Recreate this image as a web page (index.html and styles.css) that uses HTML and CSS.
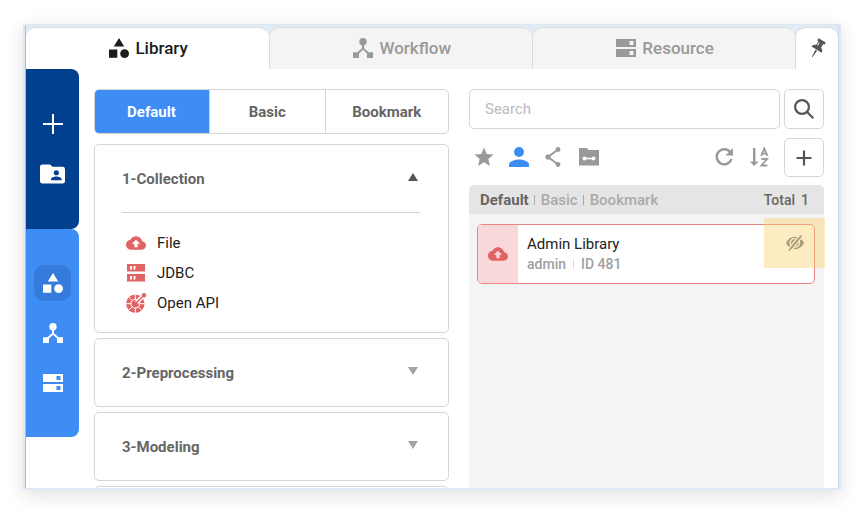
FILE: index.html
```html
<!DOCTYPE html>
<html lang="en">
<head>
<meta charset="utf-8">
<meta name="viewport" content="width=device-width, initial-scale=1">
<title>Library</title>
<link rel="stylesheet" href="styles.css">
</head>
<body>
<svg class="sprite" aria-hidden="true">
  <symbol id="shapes" viewBox="0 0 20 20"><path d="M10 0l5.200 8.600H4.800zM0 11.500h8.300v8.300H0z"/><circle cx="15.600" cy="15.600" r="4.400"/></symbol>
  <symbol id="flow" viewBox="0 0 20 20"><circle cx="10" cy="3.800" r="3.700"/><path d="M9 7h2v3.200l4.600 4H20V20h-6v-4.600l-4-3.600-4 3.600V20H0v-5.800h4.400l4.600-4z"/></symbol>
  <symbol id="server" viewBox="0 0 20 20"><path fill-rule="evenodd" d="M0 1h20v8H0zM13.500 3v4h4V3zM0 11h20v8H0zM13.500 13v4h4v-4z"/></symbol>
  <symbol id="cloud" viewBox="0 0 24 24"><path d="M19.350 10.040C18.670 6.590 15.640 4 12 4 9.110 4 6.600 5.640 5.350 8.040 2.340 8.360 0 10.910 0 14c0 3.310 2.690 6 6 6h13c2.760 0 5-2.240 5-5 0-2.640-2.050-4.780-4.650-4.960zM14 13v4h-4v-4H7l5-5 5 5h-3z"/></symbol>
</svg>
<div class="window">
  <nav class="tabs" aria-label="Sections">
    <button class="tab tab-active"><svg class="icon"><use href="#shapes"/></svg>Library</button>
    <button class="tab"><svg class="icon"><use href="#flow"/></svg>Workflow</button>
    <button class="tab"><svg class="icon"><use href="#server"/></svg>Resource</button>
    <button class="pin" aria-label="Pin panel"><svg class="icon" viewBox="0 0 20 20"><g transform="rotate(31 10 10)"><path d="M5.800 0h8.400v2.600h-1.400v4.200c1.900.6 3 1.800 3.200 4H4c.2-2.200 1.300-3.400 3.200-4V2.600H5.800zM9 11.500h2L10.300 19.500h-.6z"/><path class="shine" d="M8 3.200h1.200v3.600H8z"/></g></svg></button>
  </nav>
  <div class="body">
    <aside class="sidebar">
      <div class="rail rail-dark">
        <button class="rail-button" aria-label="Add"><svg class="icon" viewBox="0 0 20 20"><path d="M9 0h2v9h9v2h-9v9H9v-9H0V9h9z"/></svg></button>
        <button class="rail-button" aria-label="Shared folder"><svg class="icon-wide" viewBox="0 0 26 20"><path fill-rule="evenodd" d="M2.500 0h8l2.500 2.500h10.500A2.500 2.500 0 0 1 26 5v12.500a2.500 2.500 0 0 1-2.500 2.500h-21A2.500 2.500 0 0 1 0 17.500v-15A2.500 2.500 0 0 1 2.500 0zM17 6a2.700 2.700 0 1 0 0 5.400A2.700 2.700 0 0 0 17 6zM11.500 16.500h11v-1c0-1.800-3.600-2.800-5.500-2.800s-5.500 1-5.500 2.800z"/></svg></button>
      </div>
      <div class="rail rail-light">
        <button class="rail-button rail-current" aria-label="Library"><svg class="icon"><use href="#shapes"/></svg></button>
        <button class="rail-button" aria-label="Workflow"><svg class="icon"><use href="#flow"/></svg></button>
        <button class="rail-button" aria-label="Resource"><svg class="icon"><use href="#server"/></svg></button>
      </div>
    </aside>
    <main class="main">
      <section class="column">
        <div class="segments">
          <button class="segment segment-active">Default</button>
          <button class="segment">Basic</button>
          <button class="segment segment-last">Bookmark</button>
        </div>
        <div class="groups">
          <section class="group">
            <button class="group-head">1-Collection<svg class="caret caret-open" viewBox="0 0 10 8"><path d="M5 0l5 8H0z"/></svg></button>
            <ul class="items">
              <li><svg class="icon"><use href="#cloud"/></svg>File</li>
              <li><svg class="icon" viewBox="0 0 20 20"><path fill-rule="evenodd" d="M1 1h18v7.500H1zM4 3v3.500h2V3zM7.500 3v3.500h2V3zM1 11h18v7.500H1zM4 13v3.500h2V13zM7.500 13v3.500h2V13z"/></svg>JDBC</li>
              <li><svg class="icon" viewBox="0 0 20 20"><circle cx="9.300" cy="10.700" r="9.200"/><g class="spokes"><path d="M9.300 1.500v5M0 10.700h5M9.300 20v-5M2.800 4.200l3.500 3.500M2.800 17.200l3.500-3.500M15.800 17.200l-3.500-3.500M18.500 10.700h-5"/><circle cx="9.300" cy="10.700" r="4.400"/><path class="gap-line" d="M10 10l8-8"/></g><circle cx="9.300" cy="10.700" r="2.300"/><path class="needle" d="M9.300 10.700L18 2.200"/><circle cx="18" cy="2.200" r="2.200"/></svg>Open API</li>
            </ul>
          </section>
          <section class="group"><button class="group-head">2-Preprocessing<svg class="caret" viewBox="0 0 10 8"><path d="M0 0h10L5 8z"/></svg></button></section>
          <section class="group"><button class="group-head">3-Modeling<svg class="caret" viewBox="0 0 10 8"><path d="M0 0h10L5 8z"/></svg></button></section>
          <section class="group"><button class="group-head" aria-label="Next group"></button></section>
        </div>
      </section>
      <section class="column">
        <form class="search">
          <input class="search-input" type="search" placeholder="Search" aria-label="Search">
          <button class="square" type="button" aria-label="Search"><svg class="icon" viewBox="0 0 20 20"><g class="stroke"><circle cx="8" cy="8" r="6.900"/><path d="M13 13l6.300 6.300"/></g></svg></button>
        </form>
        <div class="toolbar">
          <button class="tool" aria-label="Favorites"><svg class="icon" viewBox="0 0 20 20"><path d="M10 .5l2.700 6.600 6.800.5-5.200 4.500 1.600 6.900-5.900-3.700L4.100 19l1.600-6.900L.5 7.600l6.800-.5z"/></svg></button>
          <button class="tool tool-active" aria-label="Mine"><svg class="icon" viewBox="0 0 20 20"><circle cx="10" cy="5" r="5"/><path d="M0 20v-2.500c0-3.400 6.500-5 10-5s10 1.600 10 5V20z"/></svg></button>
          <button class="tool" aria-label="Shared"><svg class="icon" viewBox="0 0 20 20"><path class="share-line" d="M14 2.500L4 10l10 7.500"/><circle cx="14" cy="2.500" r="2.400"/><circle cx="4" cy="10" r="2.600"/><circle cx="14" cy="17.500" r="2.400"/></svg></button>
          <button class="tool" aria-label="Folders"><svg class="icon" viewBox="0 0 20 20"><path d="M0 1h7.500l2 2H20v15.500H0z"/><g class="link"><circle cx="5.500" cy="11.500" r="1.900"/><circle cx="14.500" cy="11.500" r="1.900"/><path d="M5 10.700h10v1.600H5z"/></g></svg></button>
          <span class="spacer"></span>
          <button class="tool" aria-label="Refresh"><svg class="icon" viewBox="0 0 20 20"><path class="refresh-arc" d="M16.300 5.400A7.500 7.500 0 1 0 17.400 12"/><path d="M19 1v7.500h-7.500z"/></svg></button>
          <button class="tool" aria-label="Sort A to Z"><svg class="icon" viewBox="0 0 20 20"><path d="M4 1h2.400v13.500h3.200L5.200 19 .8 14.500H4z"/><g class="letters"><path d="M12.200 8.800L15.300 1.500l3.100 7.300M13.300 6.700h4M12.400 12h5.700l-5.700 6.500h6"/></g></svg></button>
          <button class="square square-low" aria-label="Add"><svg class="icon" viewBox="0 0 20 20"><path d="M8.900 2.500h2.200v6.400h6.400v2.200h-6.400v6.400H8.900v-6.400H2.500V8.900h6.400z"/></svg></button>
        </div>
        <section class="list">
          <header class="list-head">
            <span class="crumb crumb-current">Default</span><span class="crumb">Basic</span><span class="crumb">Bookmark</span>
            <span class="total">Total<span>1</span></span>
          </header>
          <article class="entry">
            <div class="entry-icon"><svg class="icon"><use href="#cloud"/></svg></div>
            <div class="entry-text">
              <h2>Admin Library</h2>
              <p><span>admin</span><span class="entry-id">ID 481</span></p>
            </div>
            <button class="hide" aria-label="Hide"><svg class="eye" viewBox="0 0 20 16"><path d="M1 8c2-4 5.200-6.200 9-6.200S17 4 19 8c-2 4-5.200 6.200-9 6.200S3 12 1 8z"/><g class="cut"><path d="M6.200 10.500A4 4 0 0 1 10.500 4M9.500 12A4 4 0 0 0 13.800 5.800"/><path d="M2.600 15L14.600 0M5.800 16L17.800 1"/></g><path class="slash" d="M4 15.500L16.500.5"/></svg></button>
          </article>
        </section>
      </section>
    </main>
  </div>
</div>
</body>
</html>
```
FILE: styles.css
```css
* { box-sizing: border-box; }

body {
  margin: 0;
  padding: 26px 29px 36px 25px;
  font-family: Roboto, "Liberation Sans", sans-serif;
  font-size: 15px;
  line-height: 20px;
  color: #222;
  background: #fff;
}

button {
  margin: 0;
  padding: 0;
  border: 0;
  background: none;
  font: inherit;
  color: inherit;
}

svg { display: block; fill: currentColor; flex: none; overflow: visible; }
.sprite { position: absolute; width: 0; height: 0; }
.icon { width: 20px; height: 20px; }
.icon-wide { width: 25px; height: 20px; }

.window {
  display: flex;
  flex-direction: column;
  height: calc(100vh - 62px);
  border: solid #d3d9e0;
  border-width: 0 1px;
  border-left-color: #b3bac2;
  background: #fff;
  box-shadow: 0 0 0 2px #dfe9f5, 0 5px 18px 3px rgba(0, 0, 0, 0.11);
  overflow: hidden;
}

.tabs { display: flex; height: 43px; padding-top: 1px; background: #e3ebf5; }

.tab {
  display: flex;
  flex: 14 1 0;
  align-items: center;
  justify-content: center;
  gap: 6px;
  padding: 0 0 2px 2px;
  border: 1px solid #dcdcdc;
  border-width: 1px 0 0 1px;
  border-radius: 10px 10px 0 0;
  background: #f4f4f4;
  color: #999;
  font-size: 17px;
  font-weight: 500;
}

.tab-active { flex-grow: 13; border-left: 0; background: #fff; color: #1c1c1c; }

.pin {
  display: flex;
  flex: 0 0 43px;
  align-items: center;
  justify-content: center;
  border: 1px solid #dcdcdc;
  border-width: 1px 0 0 1px;
  border-radius: 10px 10px 0 0;
  background: #fff;
  color: #555;
}

.shine { fill: #ddd; }

.body { display: flex; flex: 1; min-height: 0; }
.sidebar { flex: 0 0 53px; }

.rail {
  display: flex;
  flex-direction: column;
  align-items: center;
  gap: 14px;
  padding: 36px 0;
  border-radius: 0 8px 8px 0;
  color: #fff;
}

.rail-dark { padding: 37px 0; background: #00408f; }
.rail-light { background: #3d8df5; }

.rail-button {
  display: flex;
  align-items: center;
  justify-content: center;
  width: 37px;
  height: 36px;
  border-radius: 10px;
}

.rail-current { background: #357bdc; }

.main { display: flex; flex: 1; gap: 20px; min-width: 0; padding: 20px 14px 0 15px; }
.column { display: flex; flex: 1 1 0; flex-direction: column; min-width: 0; }

.segments {
  display: flex;
  flex: none;
  height: 45px;
  border: 1px solid #d6d6d6;
  border-radius: 5px;
  overflow: hidden;
}

.segment { flex: 15 1 0; border-left: 1px solid #d6d6d6; color: #666; font-weight: 700; }
.segment-active { margin: -1px 0 -1px -1px; border: 0; background: #3d8df5; color: #fff; }
.segment-last { flex-grow: 16; }

.groups { display: flex; flex-direction: column; gap: 5px; padding-top: 10px; }
.group { border: 1px solid #d6d6d6; border-radius: 5px; padding: 0 28px 0 27px; }

.group-head {
  display: flex;
  align-items: center;
  justify-content: space-between;
  width: 100%;
  height: 67px;
  color: #666;
  font-weight: 700;
}

.caret { width: 10px; height: 8px; margin: 0 2px 4px 0; color: #a3a3a3; }
.caret-open { color: #555; }

.items {
  margin: 0;
  padding: 15px 4px 14px;
  border-top: 1px solid #d0d0d0;
  list-style: none;
}

.items li { display: flex; align-items: center; gap: 11px; height: 30px; }
.items .icon { color: #e06464; }
.spokes { fill: none; stroke: #fff; stroke-width: 1; }
.gap-line { stroke-width: 4; }
.needle { fill: none; stroke: #e06464; stroke-width: 1.500; }

.search { display: flex; flex: none; gap: 4px; margin: 0; }

.search-input {
  flex: 1;
  min-width: 0;
  height: 40px;
  padding: 0 15px;
  border: 1px solid #d6d6d6;
  border-radius: 5px;
  background: #fff;
  font: inherit;
}

.search-input::placeholder { color: #bbb; opacity: 1; }

.square {
  display: flex;
  flex: 0 0 40px;
  align-items: center;
  justify-content: center;
  height: 40px;
  border: 1px solid #d6d6d6;
  border-radius: 5px;
  color: #555;
}

.square-low { height: 39px; }
.stroke { fill: none; stroke: currentColor; stroke-width: 2.200; }

.toolbar { display: flex; flex: none; align-items: center; gap: 15px; padding: 9px 0 8px 5px; }
.tool { padding-bottom: 1px; color: #999; }
.tool-active { color: #3d8df5; }
.spacer { flex: 1; }
.share-line { fill: none; stroke: currentColor; stroke-width: 2; }
.link { fill: #fff; }
.refresh-arc { fill: none; stroke: currentColor; stroke-width: 2.400; }
.letters { fill: none; stroke: currentColor; stroke-width: 1.800; }

.list { flex: 1; border-radius: 5px 5px 0 0; background: #f4f4f4; }

.list-head {
  display: flex;
  align-items: center;
  height: 29px;
  padding: 0 15px 0 11px;
  border-radius: 5px 5px 0 0;
  background: #e5e5e5;
}

.crumb { display: flex; align-items: center; color: #aaa; font-weight: 500; }
.crumb + .crumb::before { content: ""; width: 1px; height: 10px; margin: 0 6px 0 5px; background: #aaa; }
.crumb-current { color: #666; font-weight: 700; }

.total {
  display: flex;
  gap: 6px;
  margin-left: auto;
  color: #666;
  font-size: 14px;
  font-weight: 500;
}

.entry {
  position: relative;
  display: flex;
  height: 60px;
  margin: 10px 9px 0 8px;
  border: 1px solid #ee8585;
  border-radius: 5px;
  background: #fff;
}

.entry-icon {
  display: flex;
  flex: 0 0 40px;
  align-items: center;
  justify-content: center;
  border-radius: 4px 0 0 4px;
  background: #f8d8d8;
  color: #e06464;
}

.entry-text { padding: 9px; }
.entry h2 { margin: 0; font-size: 15px; font-weight: 400; }
.entry p { display: flex; margin: 0; color: #a0a0a0; font-size: 14px; font-weight: 500; }

.entry-id { display: flex; align-items: center; }
.entry-id::before { content: ""; width: 1px; height: 10px; margin: 0 7px; background: #ddd; }

.hide {
  position: absolute;
  top: -7px;
  right: -11px;
  display: flex;
  align-items: center;
  justify-content: center;
  width: 61px;
  height: 50px;
  background: rgba(250, 208, 100, 0.4);
  color: #a99a78;
}

.eye { width: 20px; height: 16px; }
.cut { fill: none; stroke: #fdecc1; stroke-width: 1.300; }
.slash { fill: none; stroke: currentColor; stroke-width: 1.500; }
```
